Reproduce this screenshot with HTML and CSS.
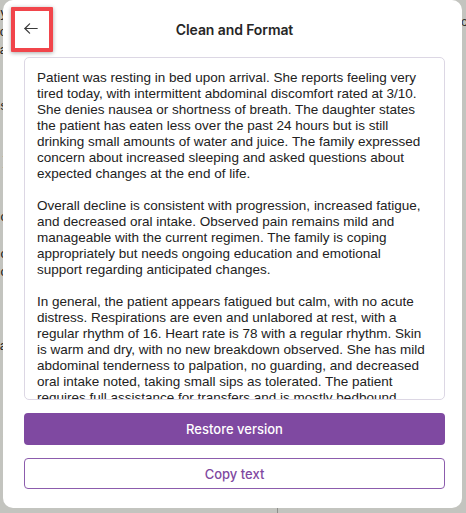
FILE: index.html
```html
<!DOCTYPE html>
<html lang="en">
<head>
<meta charset="utf-8">
<title>Clean and Format</title>
<link rel="stylesheet" href="styles.css">
</head>
<body>
<div class="page">
  <div class="page-edge">
    <p>y</p><p>o</p><p>a</p><p>&nbsp;</p><p>l</p><p>s</p><p>l</p><p>&nbsp;</p><p>(</p><p>r</p><p>&nbsp;</p><p>c</p><p>&nbsp;</p><p>c</p><p>c</p><p>&nbsp;</p><p>t</p><p>,</p><p>a</p><p>i</p><p>&nbsp;</p><p>:</p><p>r</p><p>r</p><p>&nbsp;</p><p>:</p><p>t</p>
  </div>
  <div class="page-divider"></div>
  <div class="page-fill"></div>
  <div class="page-right"><p>c</p></div>
</div>

<div class="modal">
  <header class="modal-header">
    <button class="back-btn" type="button" aria-label="Back">
      <svg width="14" height="11" viewBox="0 0 14 11" fill="none" stroke="#3a3a3a" stroke-width="1.2" stroke-linecap="round" stroke-linejoin="round">
        <path d="M13.2 5.5H0.9"/>
        <path d="M5.6 0.8L0.9 5.5L5.6 10.2"/>
      </svg>
    </button>
    <h1 class="modal-title">Clean and Format</h1>
    <span class="header-spacer"></span>
  </header>

  <div class="note-box">
    <p>Patient was resting in bed upon arrival. She reports feeling very tired today, with intermittent abdominal discomfort rated at 3/10. She denies nausea or shortness of breath. The daughter states the patient has eaten less over the past 24 hours but is still drinking small amounts of water and juice. The family expressed concern about increased sleeping and asked questions about expected changes at the end of life.</p>
    <p>Overall decline is consistent with progression, increased fatigue, and decreased oral intake. Observed pain remains mild and manageable with the current regimen. The family is coping appropriately but needs ongoing education and emotional support regarding anticipated changes.</p>
    <p>In general, the patient appears fatigued but calm, with no acute distress. Respirations are even and unlabored at rest, with a regular rhythm of 16. Heart rate is 78 with a regular rhythm. Skin is warm and dry, with no new breakdown observed. She has mild abdominal tenderness to palpation, no guarding, and decreased oral intake noted, taking small sips as tolerated. The patient requires full assistance for transfers and is mostly bedbound.</p>
  </div>

  <button class="btn btn-primary" type="button">Restore version</button>
  <button class="btn btn-outline" type="button">Copy text</button>
</div>
</body>
</html>
```

FILE: styles.css
```css
* { box-sizing: border-box; }

html, body {
  margin: 0;
  padding: 0;
}

body {
  width: 466px;
  height: 513px;
  overflow: hidden;
  background: #c3c4bf;
  font-family: "Liberation Sans", Arial, sans-serif;
  position: relative;
}

.page {
  display: flex;
  height: 513px;
}

.page-edge {
  width: 3px;
  overflow: hidden;
  direction: rtl;
  padding-top: 4px;
  font-size: 13px;
  line-height: 18.5px;
  color: #1a1a1a;
}

.page-edge p {
  margin: 0;
  white-space: nowrap;
  text-indent: -4px;
}

.page-divider {
  margin-left: 274px;
  width: 1px;
  background: #8e8f8b;
}

.page-fill {
  flex: 1;
}

.page-right {
  width: 4px;
  overflow: hidden;
  padding-top: 13px;
  font-size: 13px;
  line-height: 18px;
  color: #333333;
}

.page-right p {
  margin: 0 0 0 -1px;
}

.modal {
  position: absolute;
  left: 3px;
  top: 0;
  width: 459px;
  height: 508px;
  background: #ffffff;
  border-radius: 10px;
  padding: 0 17px 0 21px;
  display: flex;
  flex-direction: column;
}

.modal-header {
  display: grid;
  grid-template-columns: 1fr auto 1fr;
  align-items: center;
  align-content: start;
  padding-top: 7px;
  height: 57px;
}

.back-btn {
  justify-self: start;
  margin-left: -13px;
  width: 42px;
  height: 45px;
  border: 4px solid #f1454b;
  background: #ffffff;
  border-radius: 1px;
  box-shadow: 0 1px 4px rgba(0, 0, 0, 0.35);
  display: flex;
  align-items: center;
  justify-content: center;
  padding: 0 2px 2px 0;
  cursor: pointer;
}

.back-btn svg { display: block; }

.modal-title {
  margin: 0;
  font-family: "Inter", "Liberation Sans", sans-serif;
  font-size: 14px;
  font-weight: 600;
  color: #262626;
  letter-spacing: -0.1px;
}

.note-box {
  height: 343px;
  border: 1px solid #dcd7e4;
  border-radius: 5px;
  padding: 12px 19px 0 12px;
  overflow: hidden;
  color: #222222;
  font-size: 13.5px;
  line-height: 16px;
}

.note-box p {
  margin: 0 0 16px 0;
}

.btn {
  font-family: "Inter", "Liberation Sans", sans-serif;
  font-size: 13px;
  font-weight: 500;
  border-radius: 4px;
  cursor: pointer;
  width: 100%;
}

.btn-primary {
  margin-top: 13px;
  height: 32px;
  background: #7f49a1;
  border: none;
  color: #ffffff;
}

.btn-outline {
  margin-top: 13px;
  height: 31px;
  background: #ffffff;
  border: 1px solid #8c5cad;
  color: #7f49a1;
}
```
